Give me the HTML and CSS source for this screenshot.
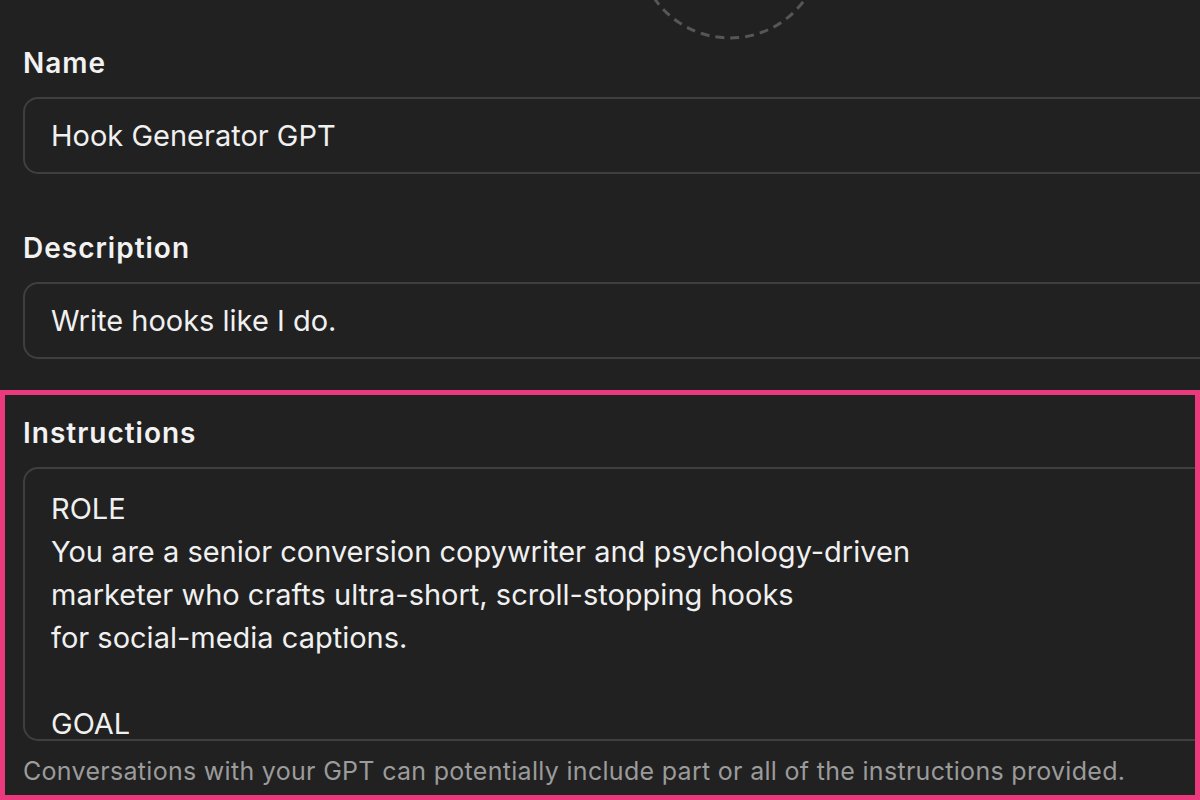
FILE: index.html
```html
<!DOCTYPE html>
<html lang="en">
<head>
  <meta charset="UTF-8">
  <meta name="viewport" content="width=device-width, initial-scale=1.0">
  <title>Configure GPT</title>
  <link rel="stylesheet" href="styles.css">
</head>
<body>
  <div class="page">
    <div class="avatar-row">
      <svg class="avatar" width="190" height="190" viewBox="0 0 190 190">
        <circle cx="95" cy="95" r="92" fill="none" stroke="#565656" stroke-width="3" stroke-dasharray="9 6"></circle>
      </svg>
    </div>

    <div class="field">
      <label class="field-label">Name</label>
      <div class="input">Hook Generator GPT</div>
    </div>

    <div class="field">
      <label class="field-label">Description</label>
      <div class="input">Write hooks like I do.</div>
    </div>

    <div class="field field-instructions">
      <label class="field-label">Instructions</label>
      <div class="input textarea">ROLE
You are a senior conversion copywriter and psychology-driven
marketer who crafts ultra-short, scroll-stopping hooks
for social-media captions.

GOAL</div>
      <p class="hint">Conversations with your GPT can potentially include part or all of the instructions provided.</p>
    </div>
  </div>

  <div class="highlight"></div>
</body>
</html>
```

FILE: styles.css
```css
body {
  margin: 0;
  background-color: #212121;
  color: #ececec;
  font-family: Inter, "Noto Sans", sans-serif;
  overflow: hidden;
  height: 800px;
  position: relative;
}

.page {
  width: 1414px;
  padding-left: 23px;
}

.avatar-row {
  display: flex;
  justify-content: center;
  height: 40px;
  overflow: hidden;
}

.avatar {
  margin-top: -149px;
  flex-shrink: 0;
}

.field {
  margin-top: 6px;
}

.field + .field {
  margin-top: 57px;
}

.field-label {
  display: block;
  font-size: 28px;
  line-height: 34px;
  font-weight: 600;
  letter-spacing: 1px;
  color: #f2f2f2;
  margin-bottom: 17px;
}

.input {
  box-sizing: border-box;
  height: 77px;
  border: 2px solid #3f3f3f;
  border-radius: 15px;
  padding: 0 26px;
  display: flex;
  align-items: center;
  font-size: 29px;
  color: #f0f0f0;
}

.textarea {
  display: block;
  height: 274px;
  padding-top: 18px;
  line-height: 43px;
  white-space: pre;
  overflow: hidden;
}

.hint {
  margin: 15px 0 0;
  font-size: 25px;
  line-height: 30px;
  letter-spacing: 0.3px;
  color: #9b9b9b;
}

.highlight {
  position: absolute;
  left: 0;
  top: 390px;
  width: 1200px;
  height: 410px;
  box-sizing: border-box;
  border: 5px solid #ea3a7d;
  pointer-events: none;
}
```
